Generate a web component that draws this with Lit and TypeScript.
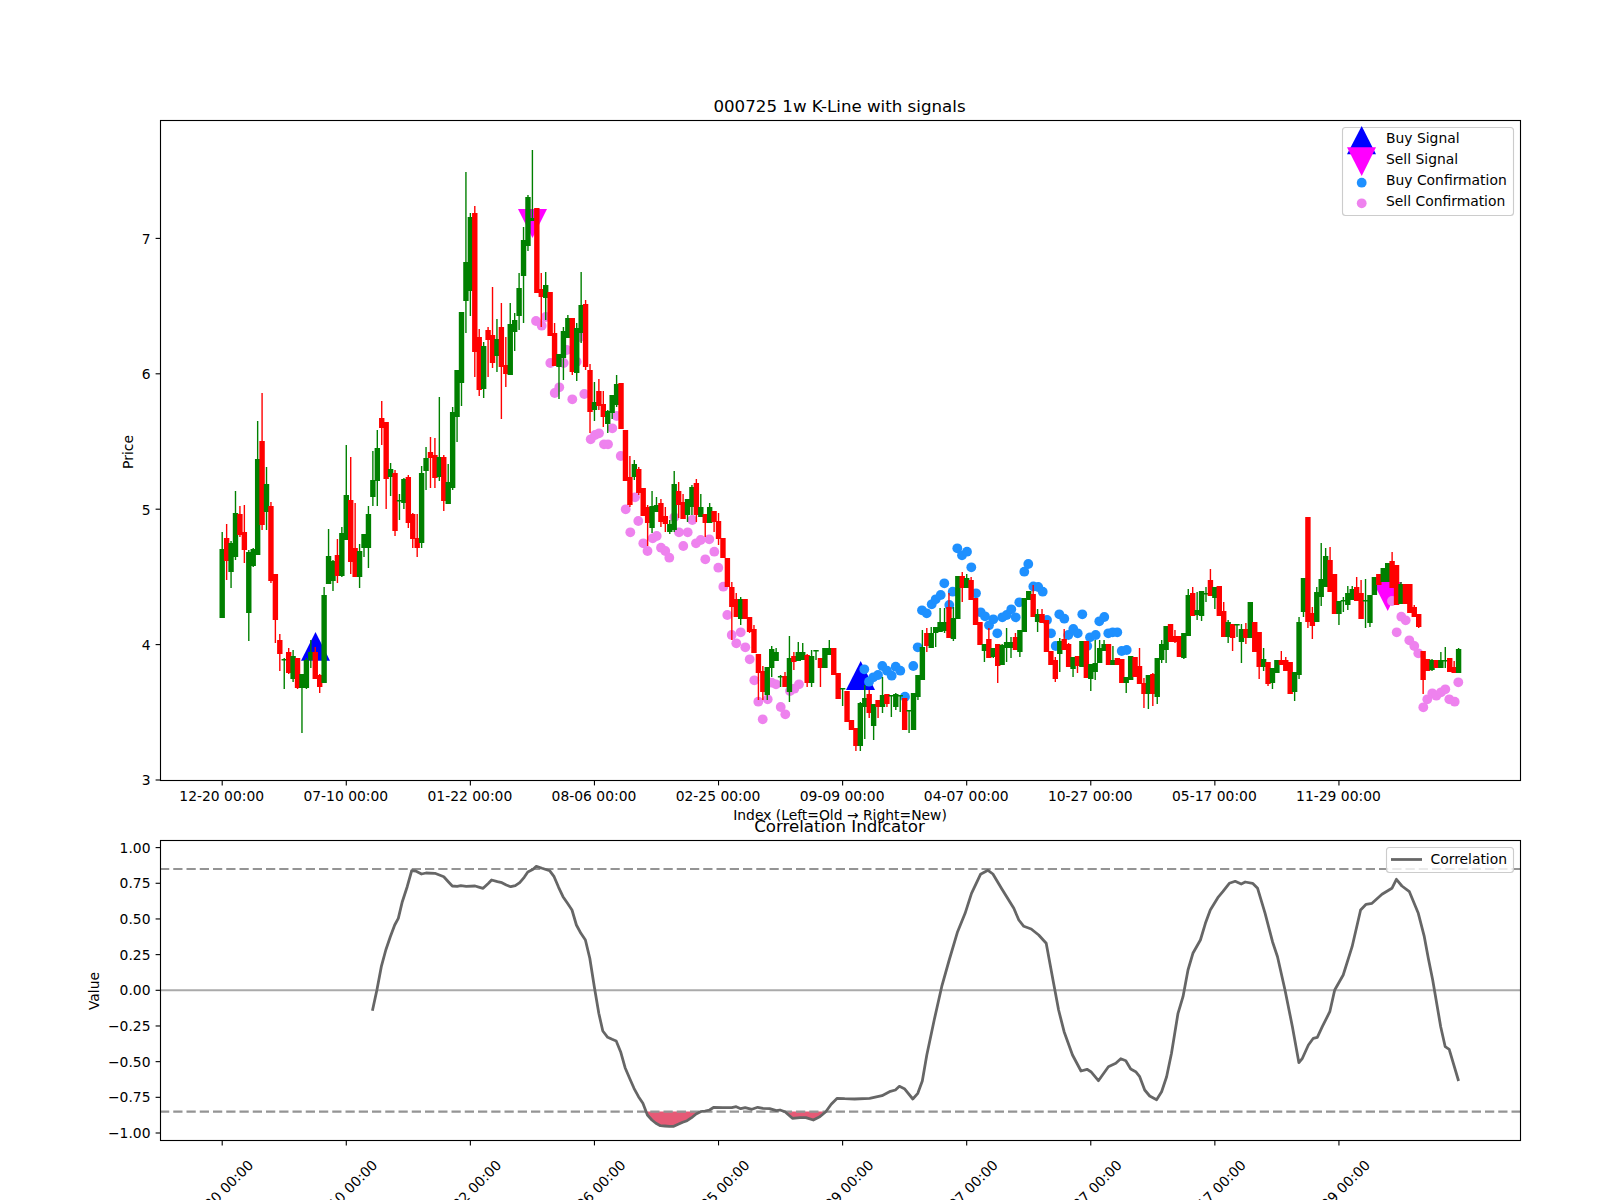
import { LitElement, css, html, svg } from 'lit';
import { customElement } from 'lit/decorators.js';

// Candles as read off the chart: colour, body top, body bottom, wick top, wick bottom (page px)
const CANDLES = `
g 549 618 532 618;r 538 561 524 580;g 543 572 541 588;g 513 557 491 560;r 514 535 506 537;r 532 550 505 563;g 552 613 550 641;g 549 566 548 567
g 459 555 421 555;r 441 525 393 530;g 484 512 467 530;r 506 581 502 583;r 574 620 574 643;r 640 654 634 671;g 659 660 658 689;r 652 673 648 674
g 656 679 650 682;r 658 688 658 689;g 674 688 674 733;g 660 688 658 689;g 652 660 640 668;r 652 679 647 679;r 675 687 674 693;g 595 683 587 683
g 556 584 529 584;g 561 581 560 591;r 555 576 539 583;g 533 576 527 577;g 495 540 445 540;r 500 562 457 574;r 548 577 503 577;g 551 577 544 588
g 534 548 534 557;g 514 548 506 568;g 480 497 451 506;g 448 481 430 506;r 418 428 401 445;r 422 479 422 509;g 469 477 463 496;r 473 531 470 536
g 500 501 494 520;g 479 503 478 509;r 477 523 475 528;r 514 539 513 548;r 538 548 514 557;g 473 543 466 548;g 458 471 447 490;r 452 458 437 488
r 455 478 438 488;g 457 477 397 481;r 457 501 455 511;g 482 504 464 504;g 412 488 407 490;g 370 417 370 442;g 312 383 312 406;g 262 301 172 333
g 217 291 213 316;r 213 352 206 377;r 337 390 329 396;g 346 389 342 398;r 330 340 327 377;r 335 363 287 368;g 339 356 319 372;r 327 367 303 419
r 365 374 337 387;g 324 375 303 375;g 320 332 313 351;g 288 316 273 330;g 240 276 227 323;g 197 246 195 251;g 218 221 150 221;r 208 293 208 293
r 289 297 273 327;g 285 298 272 320;r 292 336 292 336;r 333 366 323 366;g 354 367 354 399;g 331 358 327 380;g 318 338 315 338;r 318 372 318 375
g 328 373 323 381;g 305 333 272 343;r 304 367 300 370;r 370 412 364 433;g 402 410 382 421;r 391 406 379 410;r 404 417 391 427;g 411 424 410 433
g 395 413 395 419;g 384 405 375 407;r 383 429 383 429;r 430 481 430 481;r 477 505 456 507;g 464 477 460 480;r 469 493 467 495;r 488 516 488 516
r 507 523 505 546;g 506 528 491 533;g 505 512 497 512;r 503 522 499 527;r 516 524 507 532;g 524 532 520 534;g 484 530 471 532;r 491 505 482 518
r 502 519 494 519;g 499 515 499 522;g 487 507 485 515;r 483 515 479 522;g 507 517 494 517;r 514 523 514 537;g 507 523 503 523;r 511 522 511 532
r 521 539 513 545;r 538 558 538 558;r 558 587 558 587;r 587 607 582 640;r 599 617 593 617;g 599 619 597 625;r 599 619 599 619;r 617 632 617 633
r 629 653 625 653;r 654 673 654 700;r 671 692 666 700;g 667 695 667 700;g 649 668 646 677;g 652 661 648 661;g 676 677 675 687;r 676 687 672 687
g 658 692 636 702;r 656 662 652 670;g 652 661 642 661;g 652 660 643 660;r 655 683 654 687;g 656 683 650 687;g 650 651 650 660;r 658 668 658 687
g 648 668 648 668;g 648 655 640 655;r 648 675 648 675;r 673 699 673 699;g 688 689 688 706;r 691 722 691 722;r 720 730 720 730;r 728 746 728 751
g 703 746 702 751;g 698 707 685 739;r 694 713 690 718;g 704 726 704 740;r 700 707 700 718;g 695 707 677 713;r 694 704 694 707;g 695 696 695 717
g 694 707 693 710;g 695 696 695 712;r 698 730 698 730;g 710 711 710 733;g 693 730 693 730;g 675 697 675 700;g 647 680 630 680;r 633 646 628 652
g 633 648 627 648;g 627 633 627 647;g 622 632 608 632;g 622 631 608 633;r 607 638 593 638;g 618 639 607 641;g 576 619 576 619;r 576 588 572 602
g 578 588 574 588;r 580 600 577 600;r 598 625 598 625;r 622 645 622 645;g 644 651 644 662;r 639 658 628 658;g 648 657 648 658;r 644 666 644 683
g 645 665 644 665;g 642 648 628 662;g 642 648 637 658;r 637 650 633 650;g 630 652 630 657;g 598 632 598 632;g 591 600 591 600;r 594 617 585 617
g 614 622 609 632;r 614 623 609 623;r 620 652 620 652;r 651 665 651 665;r 660 679 657 682;g 641 654 638 672;r 639 650 629 650;r 644 667 643 667
g 657 669 657 677;r 656 666 656 673;g 641 667 641 667;r 641 678 641 678;g 664 679 664 691;g 663 672 640 680;g 648 663 640 663;g 644 651 640 651
r 644 665 644 665;g 660 665 646 665;r 658 665 658 665;r 659 683 659 683;g 677 683 677 693;g 656 680 656 680;r 657 677 657 677;r 666 684 648 684
r 683 694 678 708;g 675 694 675 709;r 674 694 673 706;g 658 697 658 704;g 644 660 640 663;g 626 650 626 663;r 624 642 624 642;r 636 642 630 643
r 636 657 636 657;g 633 658 633 659;g 595 636 589 636;r 593 616 587 616;g 610 615 592 620;g 591 616 591 621;g 593 594 587 602;r 580 596 569 596
g 587 598 587 609;r 586 616 586 616;r 611 637 602 637;g 622 637 620 643;r 624 638 624 651;g 624 625 624 637;g 629 642 624 663;r 629 638 623 644
g 602 638 602 638;r 622 652 622 652;r 632 667 632 679;g 659 667 648 671;r 662 684 662 686;g 668 683 668 689;g 660 673 660 673;r 660 665 651 665
r 660 671 657 671;r 662 694 662 694;g 672 692 672 701;g 622 675 617 679;g 578 612 578 617;r 517 622 517 628;r 613 626 607 639;g 592 622 587 622
g 579 597 543 606;g 556 587 548 587;r 560 592 547 592;r 574 614 574 614;g 601 614 601 625;g 600 601 597 612;g 593 605 586 610;g 589 600 586 600
r 587 601 577 601;r 593 619 580 619;g 600 601 579 628;g 595 623 595 627;g 577 595 577 595;r 574 585 574 585;g 568 582 568 582;g 563 582 563 582
r 561 588 552 588;r 565 605 565 605;g 584 604 582 604;r 584 604 584 604;r 584 613 584 613;r 607 617 605 617;r 614 627 614 628;r 651 680 651 694
r 659 671 659 671;g 660 670 659 671;r 660 668 660 668;g 660 668 652 668;g 660 661 647 668;r 658 672 658 672;r 667 673 661 673;g 649 673 648 673`;

const SELL_DOTS = `536,321 541.7,325.7 545.7,317 550.3,363 563.7,363 576.7,361.7 566.7,350 580,337 554.7,393 559.3,387.3 572.3,399.3 584.3,394
616.7,416 612.3,428.3 590.7,439.3 595,435 599,433.3 604,444.3 608,444.3 620.7,456 635,497.3 625.7,509.3 638.3,521 630.3,532.3 643.3,543.3 647.5,551
652.7,538.3 656.7,536 661,547.7 665.3,551 669.3,557.7 674.3,517.3 679,532.3 687.7,532.3 683.3,546 692.3,520 696,543.3 700.7,540 709.3,539.3 705.3,559.3
714.3,551.7 718.3,567.7 723.3,586.7 727.3,615 731.7,635 740.7,632.3 736.3,643.3 745.3,647.3 749.7,659.3 754.3,680.3 758.3,701.7 767.7,699.3 762.7,719.3
771.7,682.7 776,684.3 780.7,707 785.3,714.3 790,691 794.3,688.7 799,684.3 1392,601 1401.3,616.7 1405.7,620.3 1396.7,632.3 1409.3,640.3 1414.3,646
1418.3,653.3 1423.3,707.3 1427.3,699.3 1432.3,693.3 1436.3,695.7 1441,692.3 1445.3,689.3 1449.3,699.3 1454.7,701.7 1458.3,682.3`;

const BUY_DOTS = `864.3,669.3 869,681.7 873.3,677.3 878,675 882.3,666 887,670.7 891.7,675.7 895.7,666.7 900.3,670.7 905,696.7 913.3,666 917.7,647.3
922,610.3 926.7,613.3 931.7,604.3 935.7,599.3 940.7,595 944.3,583.3 949.3,605 952.7,591.7 957.3,548.3 962,555.3 967,551.7 971.3,567.3 976,593.3 980.7,612.3
985,616.3 989,625.3 993.3,619.3 997.3,633.3 1002.3,617.3 1006.7,615 1011.3,609.3 1015.7,617.3 1019.3,602.3 1024.3,571.7 1028.3,564 1033.3,586.5 1038.2,587
1042.7,591.7 1047,620 1051,633.3 1055.7,646 1059.3,614.3 1064.3,618.7 1068.3,635 1073.3,629 1077.7,633.3 1082.3,614.3 1087.3,646 1090,637.3 1095.7,635
1099.3,621.3 1104.3,617 1108.3,633.3 1112.7,632.3 1117.3,632.3 1121.7,651 1126.7,650`;

// correlation curve, first part read at 2.24x horizontal zoom, second part at 2.01x
const CORR_A = `655,632 665,570 675,500 685,450 695,410 705,375 713,355 722,305 733,260 743,212 752,213 765,222 775,219 795,220 805,225 815,230 825,245 834,258
845,259 853,257 865,259 885,258 895,262 903,265 915,250 922,240 935,245 945,248 955,255 965,260 975,257 985,248 995,232 1003,216 1015,208 1022,199 1035,205
1052,212 1062,230 1072,262 1082,290 1092,310 1102,330 1112,375 1122,400 1132,420 1142,475 1152,560 1162,640 1171,693 1182,712 1192,718 1201,723 1211,755
1221,803 1231,835 1241,865 1251,890 1261,910 1271,945 1281,960 1290,970 1300,977 1310,978 1320,979 1330,979 1340,973 1350,967 1360,962 1370,953 1380,942
1390,935 1400,933 1410,930 1420,922 1440,923 1460,923 1470,920 1480,926 1490,923 1505,928 1518,922 1530,925 1545,926 1560,932`;
const CORR_B = `0,930 10,935 25,955 40,953 52,953 67,960 80,950 92,935 103,913 115,895 130,896 150,897 180,895 205,887 220,875 232,870 240,859 250,866 267,897
277,880 286,843 295,765 310,660 325,560 340,480 357,395 372,340 385,280 403,223 418,211 428,222 445,265 470,325 480,360 490,379 505,387 520,405 535,430 550,550
560,630 571,695 588,765 605,813 617,808 625,815 640,842 660,800 675,790 685,776 695,782 705,807 715,815 723,830 733,870 743,888 757,899 767,875 777,830 787,760
800,640 810,590 820,510 830,460 845,420 855,370 865,330 880,293 890,275 903,250 915,244 927,252 935,246 950,250 960,265 975,340 990,425 1000,470 1015,570
1030,680 1043,788 1050,775 1062,735 1072,715 1080,712 1090,680 1105,635 1115,570 1132,525 1150,440 1167,330 1178,313 1190,310 1210,283 1230,265 1239,238
1250,258 1265,275 1283,340 1295,410 1303,475 1312,540 1328,680 1337,740 1345,748 1364,843`;

const pairs = (s: string) => s.trim().split(/\s+/).map((p) => p.split(',').map(Number));

const corrPoints = [
  ...pairs(CORR_A).map(([x, y]) => [80 + x / 2.24, 800 + y / 3]),
  ...pairs(CORR_B).map(([x, y]) => [780 + x / 2.01, 800 + y / 3]),
];
const corrLine = corrPoints.map((p) => `${p[0].toFixed(1)},${p[1].toFixed(1)}`).join(' ');

const DATES = ['12-20', '07-10', '01-22', '08-06', '02-25', '09-09', '04-07', '10-27', '05-17', '11-29'];
const STEP = 4.4315;
const X0 = 222.2;
const tickX = (i: number) => X0 + i * 28 * STEP;

const priceY = (p: number) => 780 - (p - 3) * 135.4;
const corrY = (v: number) => 990.3 - v * 142.7;

@customElement('app-root')
export class AppRoot extends LitElement {
  static styles = css`
    :host {
      display: block;
      width: 1600px;
      height: 1200px;
      overflow: hidden;
      background: #fff;
    }
    svg {
      display: block;
    }
    text {
      font-family: 'DejaVu Sans', sans-serif;
      font-size: 13.89px;
      fill: #000;
    }
    .title {
      font-size: 16.67px;
    }
    .mid {
      text-anchor: middle;
    }
    .end {
      text-anchor: end;
    }
    .frame {
      fill: none;
      stroke: #000;
      stroke-width: 1.11;
    }
    .tick {
      stroke: #000;
      stroke-width: 1.11;
    }
    .wick {
      stroke-width: 1.4;
    }
    .g {
      fill: #008000;
      stroke: #008000;
    }
    .r {
      fill: #ff0000;
      stroke: #ff0000;
    }
    .body {
      stroke: none;
    }
    .buy {
      fill: #0000ff;
    }
    .sell {
      fill: #ff00ff;
    }
    .dot-buy {
      fill: #1e90ff;
    }
    .dot-sell {
      fill: #ee82ee;
    }
    .legend {
      fill: #fff;
      fill-opacity: 0.8;
      stroke: #ccc;
      stroke-width: 1.11;
    }
    .corr {
      fill: none;
      stroke: #666;
      stroke-width: 2.78;
      stroke-linejoin: round;
    }
    .fill {
      fill: #dc143c;
      fill-opacity: 0.7;
    }
    .zero {
      stroke: #aaa;
      stroke-width: 2.08;
    }
    .band {
      stroke: #949494;
      stroke-width: 2.2;
      stroke-dasharray: 9.25 4;
    }
  `;

  private candles() {
    return CANDLES.trim()
      .split(/[;\n]/)
      .map((row, i) => {
        const [c, top, bot, wt, wb] = row.trim().split(' ');
        const x = X0 + i * STEP;
        const h = Math.max(+bot - +top, 1.5);
        return svg`<line class="wick ${c}" x1=${x} x2=${x} y1=${wt} y2=${wb}></line>
          <rect class="body ${c}" x=${x - 2.7} y=${top} width="5.4" height=${h}></rect>`;
      });
  }

  private dots(data: string, cls: string) {
    return pairs(data).map(([x, y]) => svg`<circle class=${cls} cx=${x} cy=${y} r="4.9"></circle>`);
  }

  private xTicks(axisBottom: number) {
    return DATES.map((_, i) => svg`<line class="tick" x1=${tickX(i)} x2=${tickX(i)} y1=${axisBottom} y2=${axisBottom + 4.9}></line>`);
  }

  private topChart() {
    return svg`
      <polygon class="buy" points="301,660.7 315.5,632 330,660.7"></polygon>
      <polygon class="buy" points="846,690 860.7,661 875,690"></polygon>
      <polygon class="sell" points="518,209 547,209 532.5,238"></polygon>
      <polygon class="sell" points="1373,582 1402,582 1387.7,611"></polygon>
      ${this.dots(SELL_DOTS, 'dot-sell')}
      ${this.dots(BUY_DOTS, 'dot-buy')}
      ${this.candles()}
      <rect class="frame" x="160.5" y="120.5" width="1360" height="660"></rect>
      ${this.xTicks(780.5)}
      ${DATES.map((d, i) => svg`<text class="mid" x=${tickX(i) - 0.5} y="801">${d} 00:00</text>`)}
      ${[3, 4, 5, 6, 7].map((p) => svg`
        <line class="tick" x1="155.6" x2="160.5" y1=${priceY(p)} y2=${priceY(p)}></line>
        <text class="end" x="150.5" y=${priceY(p) + 5.4}>${p}</text>`)}
      <text class="title mid" x="839.5" y="112">000725 1w K-Line with signals</text>
      <text class="mid" transform="translate(133 452) rotate(-90)">Price</text>
      <text class="mid" x="840" y="820">Index (Left=Old → Right=New)</text>
      <rect class="legend" x="1342.5" y="127.5" width="171" height="88" rx="3"></rect>
      <polygon class="buy" points="1347,154.3 1361.7,126 1376,154.3"></polygon>
      <polygon class="sell" points="1347,147.3 1376,147.3 1361.7,176"></polygon>
      <circle class="dot-buy" cx="1361.7" cy="182.7" r="4.9"></circle>
      <circle class="dot-sell" cx="1361.7" cy="203.3" r="4.9"></circle>
      ${['Buy Signal', 'Sell Signal', 'Buy Confirmation', 'Sell Confirmation'].map(
        (t, i) => svg`<text x="1386" y=${143 + i * 21}>${t}</text>`,
      )}
    `;
  }

  private bottomChart() {
    const ticks = [1, 0.75, 0.5, 0.25, 0, -0.25, -0.5, -0.75, -1];
    return svg`
      <defs><clipPath id="below"><rect x="160" y=${corrY(-0.85)} width="1360" height="40"></rect></clipPath></defs>
      <polygon class="fill" clip-path="url(#below)" points=${corrLine}></polygon>
      <line class="band" x1="160" x2="1520" y1=${corrY(0.85)} y2=${corrY(0.85)}></line>
      <line class="band" x1="160" x2="1520" y1=${corrY(-0.85)} y2=${corrY(-0.85)}></line>
      <line class="zero" x1="160" x2="1520" y1=${corrY(0)} y2=${corrY(0)}></line>
      <polyline class="corr" points=${corrLine}></polyline>
      <rect class="frame" x="160.5" y="840.5" width="1360" height="300"></rect>
      ${this.xTicks(1140.5)}
      ${DATES.map((d, i) => svg`<text class="mid" transform="translate(${tickX(i) + 2} 1196) rotate(-45)">${d} 00:00</text>`)}
      ${ticks.map((v) => svg`
        <line class="tick" x1="155.6" x2="160.5" y1=${corrY(v)} y2=${corrY(v)}></line>
        <text class="end" x="150.5" y=${corrY(v) + 5}>${v.toFixed(2).replace('-', '−')}</text>`)}
      <text class="title mid" x="839.5" y="832">Correlation Indicator</text>
      <text class="mid" transform="translate(99 991) rotate(-90)">Value</text>
      <rect class="legend" x="1386.5" y="847.5" width="127" height="25" rx="3"></rect>
      <line class="corr" x1="1391" x2="1422" y1="859.5" y2="859.5"></line>
      <text x="1430.5" y="863.5">Correlation</text>
    `;
  }

  render() {
    return html`
      <svg width="1600" height="1200" viewBox="0 0 1600 1200">
        ${this.topChart()} ${this.bottomChart()}
      </svg>
    `;
  }
}
